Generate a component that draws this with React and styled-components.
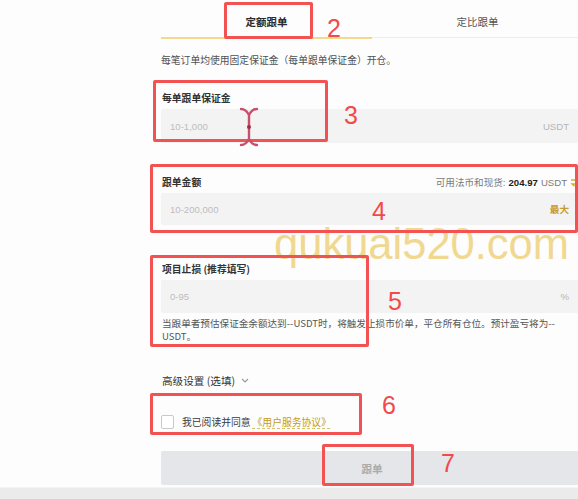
import React from "react";
import styled, { createGlobalStyle } from "styled-components";

const GlobalStyle = createGlobalStyle`
  html, body {
    margin: 0;
    padding: 0;
    background: #fdfdfd;
    overflow: hidden;
  }
  body {
    font-family: "Noto Sans CJK SC", "Liberation Sans", sans-serif;
    color: #333333;
  }
`

const Page = styled.div`
  position: relative;
  width: 578px;
  height: 499px;
  overflow: hidden;
  display: flex;
  flex-direction: column;
`
const Panel = styled.div`
  flex: 1;
  width: 422px;
  margin-left: 161px;
  display: flex;
  flex-direction: column;
`
const Tabs = styled.div`
  display: flex;
  height: 39px;
`
const Tab = styled.div`
  flex: 1;
  display: flex;
  justify-content: center;
  align-items: center;
  padding-top: 5px;
  box-sizing: border-box;
  font-size: 10.5px;
  font-weight: ${p => (p.$active ? 700 : 400)};
  color: ${p => (p.$active ? "#2b2b2b" : "#555555")};
  border-bottom: ${p => (p.$active ? "2px solid #f1d98e" : "1px solid #ededed")};
  margin-bottom: ${p => (p.$active ? "0" : "1px")};
`
const Desc = styled.p`
  margin: 14px 0 0;
  font-size: 9.8px;
  line-height: 14px;
  color: #505050;
`
const Field = styled.div`
  display: flex;
  flex-direction: column;
  gap: 4px;
  margin-top: ${p => p.$mt}px;
`
const LabelRow = styled.div`
  display: flex;
  justify-content: space-between;
  align-items: center;
  height: 14px;
`
const Label = styled.span`
  font-size: 9.8px;
  font-weight: 700;
  color: #333333;
  padding-left: 1px;
`
const Balance = styled.span`
  display: flex;
  align-items: center;
  gap: 3px;
  font-size: 9.6px;
  color: #7a7a7a;
  padding-right: 2px;
  b {
    font-family: "Liberation Sans", sans-serif;
    color: #1e1e1e;
    font-weight: 700;
  }
  em {
    font-style: normal;
    font-family: "Liberation Sans", sans-serif;
  }
`
const InputBox = styled.div`
  display: flex;
  justify-content: space-between;
  align-items: center;
  height: ${p => p.$h}px;
  background: #f3f3f3;
  border-radius: 2px;
  padding: 0 14px 0 9px;
  font-family: "Liberation Sans", "Noto Sans CJK SC", sans-serif;
  font-size: 9.6px;
  color: #bdbdbd;
`
const Unit = styled.span`
  color: ${p => (p.$gold ? "#c99a2e" : "#b5b5b5")};
  font-weight: ${p => (p.$gold ? 700 : 400)};
  font-family: ${p => (p.$gold ? '"Noto Sans CJK SC", sans-serif' : 'inherit')};
`
const Helper = styled.p`
  margin: 4px 0 0;
  font-size: 9.6px;
  line-height: 13px;
  color: #555555;
  padding-left: 1px;
`
const Advanced = styled.div`
  display: flex;
  align-items: center;
  gap: 6px;
  height: 16px;
  margin-top: 29px;
  font-size: 10.6px;
  color: #333333;
  padding-left: 1px;
`
const AgreeRow = styled.label`
  display: flex;
  align-items: center;
  height: 14px;
  margin-top: 27px;
  font-size: 9.8px;
  color: #3a3a3a;
`
const Check = styled.span`
  width: 11px;
  height: 12px;
  border: 1px solid #c9c9c9;
  border-radius: 2px;
  background: #ffffff;
  margin-right: 8px;
`
const Link = styled.a`
  color: #c39a1e;
  text-decoration: underline dashed #d9c06a;
  text-underline-offset: 2px;
  margin-left: 2px;
`
const Submit = styled.button`
  margin-top: 22px;
  height: 34px;
  border: none;
  border-radius: 2px;
  background: #e4e6ea;
  color: #ababab;
  font-family: "Noto Sans CJK SC", sans-serif;
  font-size: 10.6px;
  font-weight: 700;
`
const BottomBar = styled.div`
  height: 11px;
  background: #ebebeb;
  border-top: 1px solid #f4f4f4;
`

/* overlay: red annotation boxes, numbers, watermark, cursor */
const Mark = styled.div`
  position: absolute;
  left: ${p => p.$x}px;
  top: ${p => p.$y}px;
  width: ${p => p.$w}px;
  height: ${p => p.$h}px;
  box-sizing: border-box;
  border: 3px solid #f25252;
  border-radius: 2px;
`
const Num = styled.span`
  position: absolute;
  left: ${p => p.$x}px;
  top: ${p => p.$y}px;
  font-family: "Liberation Sans", sans-serif;
  font-size: 25px;
  line-height: 25px;
  color: #f24a4a;
`
const Watermark = styled.span`
  position: absolute;
  left: 274px;
  top: 219px;
  font-family: "Liberation Sans", sans-serif;
  font-size: 43.5px;
  line-height: 50px;
  color: #f0d78c;
  opacity: 0.95;
`
const Cursor = styled.svg`
  position: absolute;
  left: 239px;
  top: 107px;
`

const marks = [
  { x: 224, y: 2, w: 89, h: 37 },
  { x: 153, y: 80, w: 175, h: 62 },
  { x: 150, y: 164, w: 428, h: 69 },
  { x: 150, y: 255, w: 219, h: 92 },
  { x: 150, y: 393, w: 212, h: 42 },
  { x: 322, y: 444, w: 92, h: 42 },
];
const nums = [
  { n: "2", x: 327, y: 16 },
  { n: "3", x: 344, y: 103 },
  { n: "4", x: 372, y: 199 },
  { n: "5", x: 388, y: 289 },
  { n: "6", x: 382, y: 393 },
  { n: "7", x: 441, y: 451 },
];

function SwapIcon() {
  return (
    <svg width="11" height="10" viewBox="0 0 11 10">
      <path d="M1 3h8L6.5 0.8M10 7H2l2.5 2.2" fill="none" stroke="#d7ad2c" strokeWidth="1.3" />
    </svg>
  )
}

export default function App() {
  return (
    <>
      <GlobalStyle />
      <Page>
        <Panel>
          <Tabs>
            <Tab $active>定额跟单</Tab>
            <Tab>定比跟单</Tab>
          </Tabs>
          <Desc>每笔订单均使用固定保证金（每单跟单保证金）开仓。</Desc>

          <Field $mt={24}>
            <LabelRow><Label>每单跟单保证金</Label></LabelRow>
            <InputBox $h={34}>
              <span>10-1,000</span>
              <Unit>USDT</Unit>
            </InputBox>
          </Field>

          <Field $mt={32}>
            <LabelRow>
              <Label>跟单金额</Label>
              <Balance>可用法币和现货: <b>204.97</b><em>USDT</em><SwapIcon /></Balance>
            </LabelRow>
            <InputBox $h={32}>
              <span>10-200,000</span>
              <Unit $gold>最大</Unit>
            </InputBox>
          </Field>

          <Field $mt={37}>
            <LabelRow><Label>项目止损 (推荐填写)</Label></LabelRow>
            <InputBox $h={33}>
              <span>0-95</span>
              <Unit>%</Unit>
            </InputBox>
          </Field>
          <Helper>当跟单者预估保证金余额达到--USDT时，将触发止损市价单，平仓所有仓位。预计盈亏将为--<br />USDT。</Helper>

          <Advanced>
            高级设置 (选填)
            <svg width="8" height="5" viewBox="0 0 8 5">
              <path d="M1 1l3 3 3-3" fill="none" stroke="#999" strokeWidth="1.1" />
            </svg>
          </Advanced>

          <AgreeRow>
            <Check />
            我已阅读并同意<Link>《用户服务协议》</Link>
          </AgreeRow>

          <Submit>跟单</Submit>
        </Panel>
        <BottomBar />

        <Watermark>qukuai520.com</Watermark>
        {marks.map((m, i) => (
          <Mark key={i} $x={m.x} $y={m.y} $w={m.w} $h={m.h} />
        ))}
        {nums.map(n => (
          <Num key={n.n} $x={n.x} $y={n.y}>{n.n}</Num>
        ))}
        <Cursor width="20" height="40" viewBox="0 0 20 40">
          <path d="M2 2c4 0 6 2 8 6c2-4 4-6 8-6M10 8v24M2 38c4 0 6-2 8-6c2 4 4 6 8 6" fill="none" stroke="#c8506e" strokeWidth="2.4" strokeLinecap="round" />
          <circle cx="10" cy="20" r="2" fill="#9c2f4a" />
        </Cursor>
      </Page>
    </>
  )
}
